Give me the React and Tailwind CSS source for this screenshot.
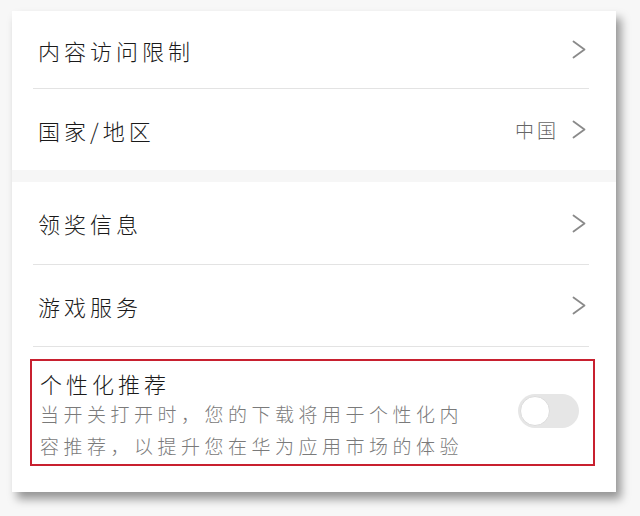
const font = { fontFamily: '"Noto Sans CJK SC", "Noto Sans", sans-serif' };

const Chevron = () => (
  <svg width="14" height="19" viewBox="0 0 14 19" fill="none" className="shrink-0">
    <path d="M1.5 1.5 L12.5 9.5 L1.5 17.5" stroke="#8a8a8a" strokeWidth="1.8" strokeLinecap="round" strokeLinejoin="round" />
  </svg>
);

const Row = ({ label, value, height, divider = true }) => (
  <div className={`ml-[21px] mr-[27px] flex items-center ${divider ? "border-b border-[#e3e3e3]" : ""}`} style={{ height }}>
    <span className="pl-[5px] text-[22px] font-light tracking-[4px] text-[#1a1a1a] leading-none">{label}</span>
    <div className="ml-auto mr-[3px] flex items-center gap-[13px]">
      {value && <span className="text-[19px] font-light tracking-[3px] text-[#666] leading-none">{value}</span>}
      <Chevron />
    </div>
  </div>
);

export default function App() {
  return (
    <div className="w-[640px] h-[516px] bg-[#f7f7f7] overflow-hidden pt-[11px] pl-[12px]" style={font}>
      <div className="w-[604px] h-[481px] bg-white shadow-[5px_7px_9px_rgba(0,0,0,0.4)] flex flex-col">
        <Row label="内容访问限制" height={78} />
        <Row label="国家/地区" value="中国" height={81} divider={false} />
        <div className="h-[12px] bg-[#f6f6f6]" />
        <Row label="领奖信息" height={83} />
        <Row label="游戏服务" height={82} />

        <div className="mt-[12px] ml-[18px] mr-[21px] h-[107px] border-2 border-[#c8202f] flex items-center pl-[8px] pr-[14px]">
          <div className="flex flex-col">
            <div className="h-[30px] mt-[4px] flex items-center text-[22px] font-light tracking-[4px] text-[#1a1a1a] leading-none">个性化推荐</div>
            <div className="h-[32px] flex items-center text-[19px] font-light tracking-[4.5px] text-[#7a7a7a] leading-none whitespace-nowrap">当开关打开时，您的下载将用于个性化内</div>
            <div className="h-[32px] flex items-center text-[19px] font-light tracking-[4.5px] text-[#7a7a7a] leading-none whitespace-nowrap">容推荐，以提升您在华为应用市场的体验</div>
          </div>
          <div className="ml-auto -mt-[4px] w-[61px] h-[34px] rounded-full bg-[#e6e6e6] flex items-center pl-[2px]">
            <div className="w-[30px] h-[30px] rounded-full bg-white border border-[#dcdcdc]" />
          </div>
        </div>
      </div>
    </div>
  );
}
